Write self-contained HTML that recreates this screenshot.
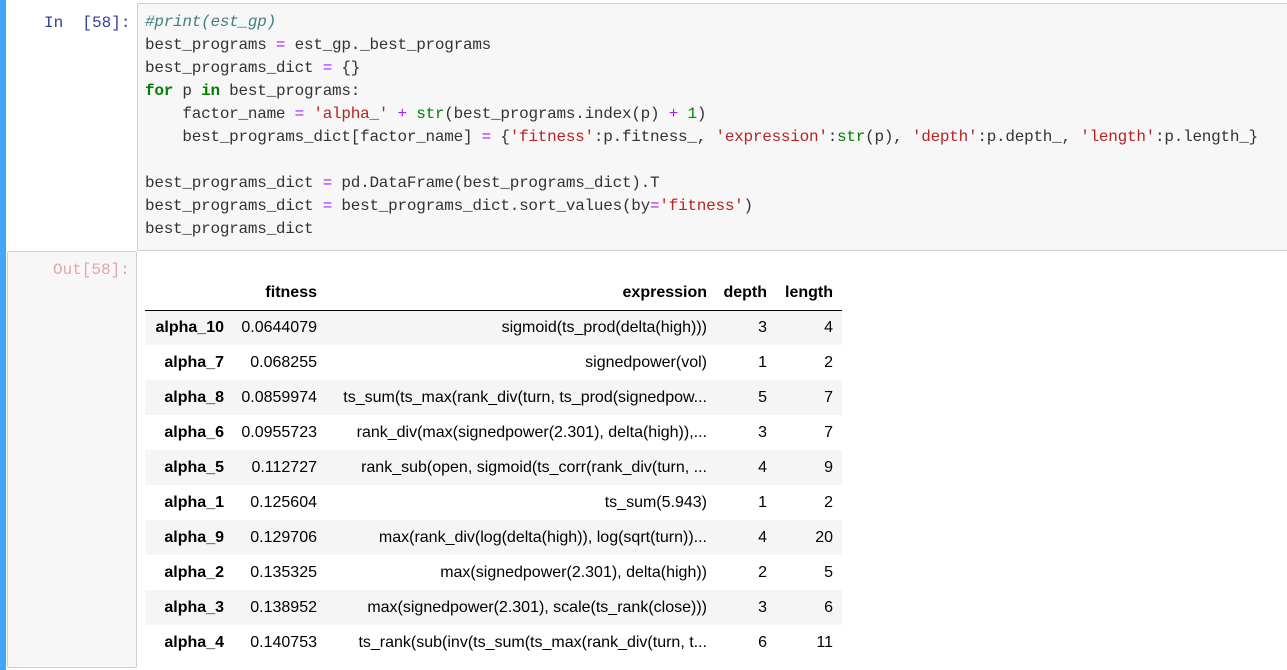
<!DOCTYPE html>
<html><head><meta charset="utf-8"><style>
*{margin:0;padding:0;box-sizing:border-box}
body{width:1287px;height:670px;background:#fff;position:relative;overflow:hidden;font-family:"Liberation Sans",Arial,sans-serif}
#bar{position:absolute;left:0;top:0;width:6px;height:670px;background:#42a5f5}
.prompt{position:absolute;font-family:"Liberation Mono","DejaVu Sans Mono",monospace;font-size:16px;line-height:23px}
#inp{position:absolute;left:137px;top:3px;width:1152px;height:248px;background:#f7f7f7;border:1px solid #cfcfcf;border-radius:2px}
pre{position:absolute;left:145px;top:11px;font-family:"Liberation Mono","DejaVu Sans Mono",monospace;font-size:16px;line-height:23px;color:#333;letter-spacing:-0.25px}
.k{color:#008000;font-weight:bold}.o{color:#aa22ff}.s{color:#ba2121}.b{color:#008000}.c{color:#408080;font-style:italic}.n{color:#080}
#outp{position:absolute;left:7px;top:251px;width:130px;height:417px;background:#f7f7f7;border:1px solid #cfcfcf;border-radius:2px}
table{position:absolute;left:145px;top:277px;border-collapse:collapse;table-layout:fixed;font-size:16px;color:#000}
td,th{height:35px;text-align:right;white-space:nowrap;overflow:hidden}
thead th{height:33px;border-bottom:1px solid #000;font-weight:bold}
tbody tr:nth-child(odd){background:#f5f5f5}
tbody th{font-weight:bold}
</style></head><body>
<div id="bar"></div>
<div class="prompt" style="left:44px;top:12px;color:#303f9f">In&nbsp;&nbsp;[58]:</div>
<div id="inp"></div>
<pre><span class="c">#print(est_gp)</span>
best_programs <span class="o">=</span> est_gp._best_programs
best_programs_dict <span class="o">=</span> {}
<span class="k">for</span> p <span class="k">in</span> best_programs:
    factor_name <span class="o">=</span> <span class="s">'alpha_'</span> <span class="o">+</span> <span class="b">str</span>(best_programs.index(p) <span class="o">+</span> <span class="n">1</span>)
    best_programs_dict[factor_name] <span class="o">=</span> {<span class="s">'fitness'</span>:p.fitness_, <span class="s">'expression'</span>:<span class="b">str</span>(p), <span class="s">'depth'</span>:p.depth_, <span class="s">'length'</span>:p.length_}

best_programs_dict <span class="o">=</span> pd.DataFrame(best_programs_dict).T
best_programs_dict <span class="o">=</span> best_programs_dict.sort_values(by<span class="o">=</span><span class="s">'fitness'</span>)
best_programs_dict</pre>
<div id="outp"></div>
<div class="prompt" style="left:53px;top:259px;color:#e0a8a8">Out[58]:</div>
<table>
<colgroup><col style="width:87px"><col style="width:93px"><col style="width:390px"><col style="width:60px"><col style="width:67px"></colgroup>
<thead><tr><th></th><th style="padding-right:8px">fitness</th><th style="padding-right:8px">expression</th><th style="padding-right:8px">depth</th><th style="padding-right:9px">length</th></tr></thead>
<tbody>
<tr><th style="padding-right:8px">alpha_10</th><td style="padding-right:8px">0.0644079</td><td style="padding-right:8px">sigmoid(ts_prod(delta(high)))</td><td style="padding-right:8px">3</td><td style="padding-right:9px">4</td></tr>
<tr><th style="padding-right:8px">alpha_7</th><td style="padding-right:8px">0.068255</td><td style="padding-right:8px">signedpower(vol)</td><td style="padding-right:8px">1</td><td style="padding-right:9px">2</td></tr>
<tr><th style="padding-right:8px">alpha_8</th><td style="padding-right:8px">0.0859974</td><td style="padding-right:8px">ts_sum(ts_max(rank_div(turn, ts_prod(signedpow...</td><td style="padding-right:8px">5</td><td style="padding-right:9px">7</td></tr>
<tr><th style="padding-right:8px">alpha_6</th><td style="padding-right:8px">0.0955723</td><td style="padding-right:8px">rank_div(max(signedpower(2.301), delta(high)),...</td><td style="padding-right:8px">3</td><td style="padding-right:9px">7</td></tr>
<tr><th style="padding-right:8px">alpha_5</th><td style="padding-right:8px">0.112727</td><td style="padding-right:8px">rank_sub(open, sigmoid(ts_corr(rank_div(turn, ...</td><td style="padding-right:8px">4</td><td style="padding-right:9px">9</td></tr>
<tr><th style="padding-right:8px">alpha_1</th><td style="padding-right:8px">0.125604</td><td style="padding-right:8px">ts_sum(5.943)</td><td style="padding-right:8px">1</td><td style="padding-right:9px">2</td></tr>
<tr><th style="padding-right:8px">alpha_9</th><td style="padding-right:8px">0.129706</td><td style="padding-right:8px">max(rank_div(log(delta(high)), log(sqrt(turn))...</td><td style="padding-right:8px">4</td><td style="padding-right:9px">20</td></tr>
<tr><th style="padding-right:8px">alpha_2</th><td style="padding-right:8px">0.135325</td><td style="padding-right:8px">max(signedpower(2.301), delta(high))</td><td style="padding-right:8px">2</td><td style="padding-right:9px">5</td></tr>
<tr><th style="padding-right:8px">alpha_3</th><td style="padding-right:8px">0.138952</td><td style="padding-right:8px">max(signedpower(2.301), scale(ts_rank(close)))</td><td style="padding-right:8px">3</td><td style="padding-right:9px">6</td></tr>
<tr><th style="padding-right:8px">alpha_4</th><td style="padding-right:8px">0.140753</td><td style="padding-right:8px">ts_rank(sub(inv(ts_sum(ts_max(rank_div(turn, t...</td><td style="padding-right:8px">6</td><td style="padding-right:9px">11</td></tr>
</tbody></table>
</body></html>
